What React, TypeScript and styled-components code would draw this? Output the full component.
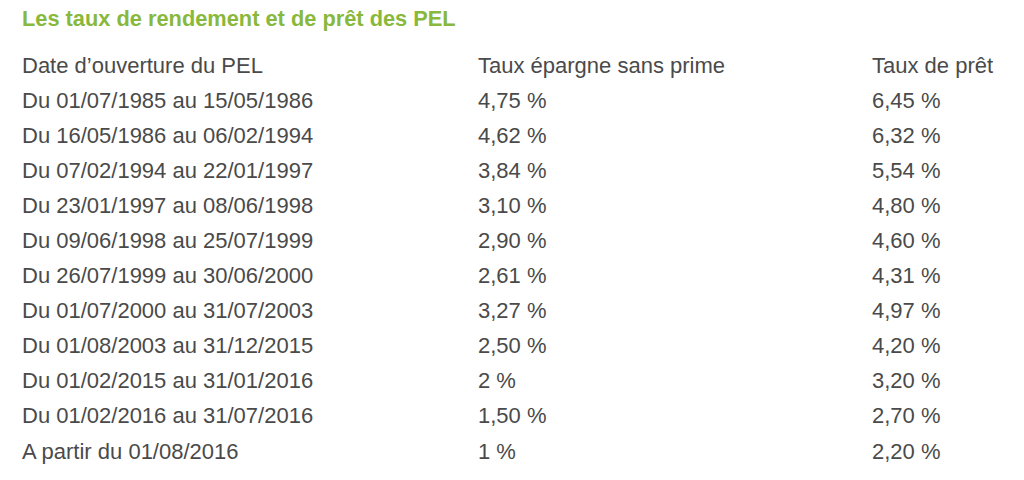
import React from "react";
import styled, { createGlobalStyle } from "styled-components";

const Global = createGlobalStyle`
  html, body { margin: 0; padding: 0; background: #ffffff; }
  body { font-family: "Liberation Sans", Arial, sans-serif; }
`;

const Page = styled.div`
  width: 1024px;
  height: 480px;
  box-sizing: border-box;
  padding: 6px 0 0 22px;
  background: #fff;
`;

const Title = styled.h2`
  margin: 0;
  font-family: "Liberation Sans", Arial, sans-serif;
  font-weight: bold;
  font-size: 21.8px;
  line-height: 26px;
  color: #88b83c;
`;

const Table = styled.div`
  margin-top: 16px;
  display: grid;
  grid-template-columns: 456px 394px auto;
  grid-auto-rows: 35.1px;
  align-items: center;
`;

const Cell = styled.div`
  font-family: "Liberation Sans", Arial, sans-serif;
  font-size: 22px;
  color: #4a4a4a;
  white-space: nowrap;
  line-height: 1;
`;

const rows: [string, string, string][] = [
  ["Date d’ouverture du PEL", "Taux épargne sans prime", "Taux de prêt"],
  ["Du 01/07/1985 au 15/05/1986", "4,75 %", "6,45 %"],
  ["Du 16/05/1986 au 06/02/1994", "4,62 %", "6,32 %"],
  ["Du 07/02/1994 au 22/01/1997", "3,84 %", "5,54 %"],
  ["Du 23/01/1997 au 08/06/1998", "3,10 %", "4,80 %"],
  ["Du 09/06/1998 au 25/07/1999", "2,90 %", "4,60 %"],
  ["Du 26/07/1999 au 30/06/2000", "2,61 %", "4,31 %"],
  ["Du 01/07/2000 au 31/07/2003", "3,27 %", "4,97 %"],
  ["Du 01/08/2003 au 31/12/2015", "2,50 %", "4,20 %"],
  ["Du 01/02/2015 au 31/01/2016", "2 %", "3,20 %"],
  ["Du 01/02/2016 au 31/07/2016", "1,50 %", "2,70 %"],
  ["A partir du 01/08/2016", "1 %", "2,20 %"],
];

export default function App() {
  return (
    <>
      <Global />
      <Page>
        <Title>Les taux de rendement et de prêt des PEL</Title>
        <Table>
          {rows.map((r, i) => (
            <React.Fragment key={i}>
              <Cell>{r[0]}</Cell>
              <Cell>{r[1]}</Cell>
              <Cell>{r[2]}</Cell>
            </React.Fragment>
          ))}
        </Table>
      </Page>
    </>
  );
}
